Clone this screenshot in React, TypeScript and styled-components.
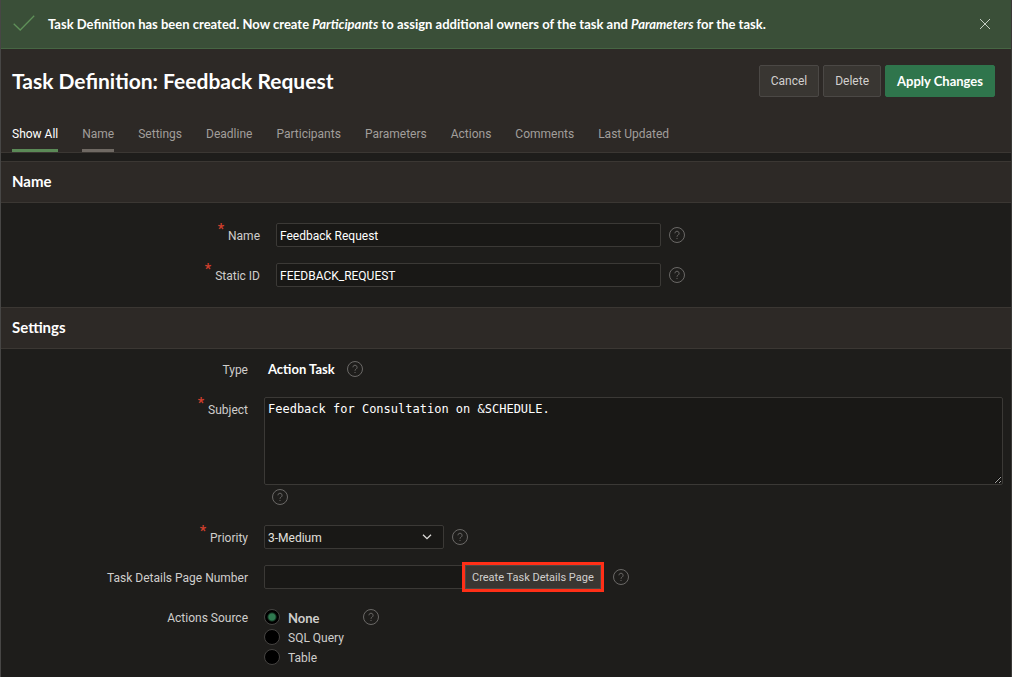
import { useId } from "react";
import type { ReactNode } from "react";
import styled, { createGlobalStyle, css } from "styled-components";

const bodyFont = css`
  font-family: Roboto, "Liberation Sans", sans-serif;
  font-size: 12px;
  font-weight: 400;
`;

const strongFont = css`
  font-family: Lato, "Liberation Sans", sans-serif;
  font-size: 13px;
  font-weight: 700;
`;

const GlobalStyle = createGlobalStyle`
  *, *::before, *::after { box-sizing: border-box; }
  html { background: #1e1d1b; }
  body { margin: 0; color: #d0cecc; line-height: 20px; ${bodyFont} }
`;

const Page = styled.div`
  min-height: 100vh;
  background: #1e1d1b;
  border-left: 1px solid #474645;
  border-right: 1px solid #3a3937;
`;

const Banner = styled.div`
  display: flex;
  align-items: center;
  gap: 12px;
  height: 49px;
  padding: 0 20px 0 11px;
  background: #3a4f38;
  border-bottom: 1px solid #466643;
`;

const BannerText = styled.p`
  ${strongFont}
  flex: 1;
  margin: 0;
  color: #ffffff;
`;

const CloseButton = styled.button`
  display: flex;
  padding: 0;
  border: 0;
  background: none;
  cursor: pointer;
`;

const Header = styled.header`
  padding-top: 16px;
  background: #2d2926;
  border-bottom: 1px solid #3b3733;
`;

const TitleBar = styled.div`
  display: flex;
  align-items: center;
  gap: 4px;
  min-height: 32px;
  padding: 0 16px 0 11px;
`;

const Title = styled.h1`
  ${strongFont}
  flex: 1;
  margin: 0;
  font-size: 21px;
  line-height: 32px;
  color: #ffffff;
`;

const Button = styled.button<{ $hot?: boolean }>`
  ${(p) => (p.$hot ? strongFont : bodyFont)}
  height: 32px;
  padding: 0 11px;
  border: 1px solid ${(p) => (p.$hot ? "#2f754c" : "#4b4845")};
  border-radius: 2px;
  background: ${(p) => (p.$hot ? "#2f754c" : "#393632")};
  color: ${(p) => (p.$hot ? "#ffffff" : "#d2d0ce")};
  white-space: nowrap;
  cursor: pointer;
`;

const Tabs = styled.nav`
  display: flex;
  gap: 24px;
  margin-top: 20px;
  padding: 0 11px;
`;

type TabState = "active" | "visible" | "idle";

const tabBar = { active: "#5b8a57", visible: "#6f6963", idle: "transparent" };

const Tab = styled.a<{ $state: TabState }>`
  padding: 7px 0 5px;
  border-bottom: 3px solid ${(p) => tabBar[p.$state]};
  color: ${(p) => (p.$state === "active" ? "#ffffff" : "#a19e9b")};
  text-decoration: none;
  white-space: nowrap;
`;

const Region = styled.section<{ $spaced?: boolean }>`
  margin-top: ${(p) => (p.$spaced ? "8px" : "0")};
`;

const RegionTitle = styled.h2`
  ${strongFont}
  margin: 0;
  padding: 0 11px 2px;
  border: 1px solid #3b3733;
  border-width: 1px 0;
  background: #2d2926;
  font-size: 15px;
  line-height: 38px;
  color: #ffffff;
`;

const Fields = styled.div<{ $labelWidth: number; $padding: string }>`
  --label-width: ${(p) => p.$labelWidth}px;
  display: flex;
  flex-direction: column;
  gap: 16px;
  padding: ${(p) => p.$padding};
`;

const Row = styled.div`
  display: flex;
  align-items: flex-start;
  gap: 16px;
`;

const LabelCell = styled.div`
  display: flex;
  flex: none;
  justify-content: flex-end;
  gap: 4px;
  width: var(--label-width);
  height: 24px;
  line-height: 26px;
`;

const Required = styled.span`
  color: #d03f2d;
  font-size: 14px;
  font-weight: 700;
  line-height: 12px;
`;

const Control = styled.div`
  display: flex;
  flex: 1;
  flex-wrap: wrap;
  align-items: flex-start;
  min-width: 0;
`;

const fieldBox = css`
  border: 1px solid #3b3936;
  border-radius: 2px;
  background: #191816;
  color: #ffffff;
  margin: 0;
`;

const TextInput = styled.input<{ $width: number }>`
  ${bodyFont}
  ${fieldBox}
  width: ${(p) => p.$width}px;
  height: 24px;
  padding: 2px 3px 0;
`;

const TextArea = styled.textarea`
  ${fieldBox}
  display: block;
  width: 100%;
  height: 88px;
  padding: 3px;
  font-family: "DejaVu Sans Mono", monospace;
  font-size: 12px;
  line-height: 16px;
  color-scheme: dark;
  resize: both;
`;

const SelectBox = styled.div`
  position: relative;
  width: 180px;
  height: 24px;
`;

const Select = styled.select`
  ${bodyFont}
  ${fieldBox}
  width: 100%;
  height: 24px;
  padding: 2px 24px 0 3px;
  appearance: none;
  color: #e2e0de;
`;

const SelectArrow = styled.svg`
  position: absolute;
  top: 8px;
  right: 12px;
  pointer-events: none;
`;

const DisplayValue = styled.output`
  ${strongFont}
  padding: 0 4px;
  line-height: 24px;
  color: #ffffff;
`;

const HelpButton = styled.button`
  display: flex;
  align-items: center;
  height: 24px;
  margin-left: 8px;
  padding: 0;
  border: 0;
  background: none;
  color: #6b6967;
  cursor: pointer;
`;

const InlineButton = styled(Button)`
  height: 24px;
  margin-right: 4px;
  padding: 0 6px;
  font-size: 11px;
  border-radius: 0;
  outline: 3px solid #ff2f17;
`;

const RadioList = styled.div`
  display: flex;
  flex-direction: column;
  padding: 3px 11px 0 0;
`;

const RadioOption = styled.label`
  display: flex;
  align-items: flex-start;
  gap: 8px;
  height: 20px;

  &:has(input:checked) {
    ${strongFont}
  }
`;

const Radio = styled.input`
  width: 16px;
  height: 16px;
  margin: 1px 0 0;
  border: 1px solid #454341;
  border-radius: 50%;
  appearance: none;
  background: #000000;

  &:checked {
    background: radial-gradient(circle, #2f7a50 0 3px, #000000 5px);
  }
`;

function Help({ topic }: { topic: string }) {
  return (
    <HelpButton type="button" aria-label={`Help for ${topic}`}>
      <svg width="16" height="16" viewBox="0 0 16 16" fill="none" stroke="currentColor">
        <circle cx="8" cy="8" r="7.5" />
        <path d="M5.9 6.3a2.1 2.1 0 1 1 3.2 1.8c-.7.45-1.1.75-1.1 1.6" />
        <path d="M8 11v1" />
      </svg>
    </HelpButton>
  );
}

interface FieldProps {
  label: string;
  required?: boolean;
  group?: boolean;
  children: (id: string) => ReactNode;
}

function Field({ label, required, group, children }: FieldProps) {
  const id = useId();
  return (
    <Row>
      <LabelCell>
        {required && <Required aria-hidden="true">*</Required>}
        {group ? <span id={id}>{label}</span> : <label htmlFor={id}>{label}</label>}
      </LabelCell>
      <Control>
        {children(id)}
        <Help topic={label} />
      </Control>
    </Row>
  );
}

const tabs: { label: string; state: TabState }[] = [
  { label: "Show All", state: "active" },
  { label: "Name", state: "visible" },
  { label: "Settings", state: "idle" },
  { label: "Deadline", state: "idle" },
  { label: "Participants", state: "idle" },
  { label: "Parameters", state: "idle" },
  { label: "Actions", state: "idle" },
  { label: "Comments", state: "idle" },
  { label: "Last Updated", state: "idle" },
];

const sources = ["None", "SQL Query", "Table"];

export default function App() {
  return (
    <Page>
      <GlobalStyle />
      <Banner role="status">
        <svg width="24" height="24" viewBox="0 0 24 24" fill="none" stroke="#5f9159" strokeWidth="1.3">
          <path d="M1.7 11.8 8.2 18 22.2 3.8" />
        </svg>
        <BannerText>
          Task Definition has been created. Now create <em>Participants</em> to assign additional
          owners of the task and <em>Parameters</em> for the task.
        </BannerText>
        <CloseButton type="button" aria-label="Close">
          <svg width="12" height="12" viewBox="0 0 12 12" stroke="#c4cdc3">
            <path d="m1 1 10 10M11 1 1 11" />
          </svg>
        </CloseButton>
      </Banner>

      <Header>
        <TitleBar>
          <Title>Task Definition: Feedback Request</Title>
          <Button type="button">Cancel</Button>
          <Button type="button">Delete</Button>
          <Button type="button" $hot>
            Apply Changes
          </Button>
        </TitleBar>
        <Tabs>
          {tabs.map((tab) => (
            <Tab key={tab.label} href="#" $state={tab.state}>
              {tab.label}
            </Tab>
          ))}
        </Tabs>
      </Header>

      <main>
        <Region $spaced>
          <RegionTitle>Name</RegionTitle>
          <Fields $labelWidth={259} $padding="20px 8px 20px 0">
            <Field label="Name" required>
              {(id) => <TextInput id={id} $width={385} defaultValue="Feedback Request" />}
            </Field>
            <Field label="Static ID" required>
              {(id) => <TextInput id={id} $width={385} defaultValue="FEEDBACK_REQUEST" />}
            </Field>
          </Fields>
        </Region>

        <Region>
          <RegionTitle>Settings</RegionTitle>
          <Fields $labelWidth={247} $padding="8px 8px 4px 0">
            <Field label="Type">{(id) => <DisplayValue id={id}>Action Task</DisplayValue>}</Field>
            <Field label="Subject" required>
              {(id) => (
                <TextArea id={id} defaultValue="Feedback for Consultation on &SCHEDULE." />
              )}
            </Field>
            <Field label="Priority" required>
              {(id) => (
                <SelectBox>
                  <Select id={id} defaultValue="3-Medium">
                    <option>1-Urgent</option>
                    <option>2-High</option>
                    <option>3-Medium</option>
                    <option>4-Low</option>
                    <option>5-Lowest</option>
                  </Select>
                  <SelectArrow width="10" height="8" viewBox="0 0 10 8" fill="none" stroke="#dddbd9" strokeWidth="1.3">
                    <path d="m1 1.7 4 4 4-4" />
                  </SelectArrow>
                </SelectBox>
              )}
            </Field>
            <Field label="Task Details Page Number">
              {(id) => (
                <>
                  <TextInput id={id} $width={201} />
                  <InlineButton type="button">Create Task Details Page</InlineButton>
                </>
              )}
            </Field>
            <Field label="Actions Source" group>
              {(id) => (
                <RadioList role="radiogroup" aria-labelledby={id}>
                  {sources.map((source) => (
                    <RadioOption key={source}>
                      <Radio type="radio" name="source" defaultChecked={source === "None"} />
                      {source}
                    </RadioOption>
                  ))}
                </RadioList>
              )}
            </Field>
          </Fields>
        </Region>
      </main>
    </Page>
  );
}
